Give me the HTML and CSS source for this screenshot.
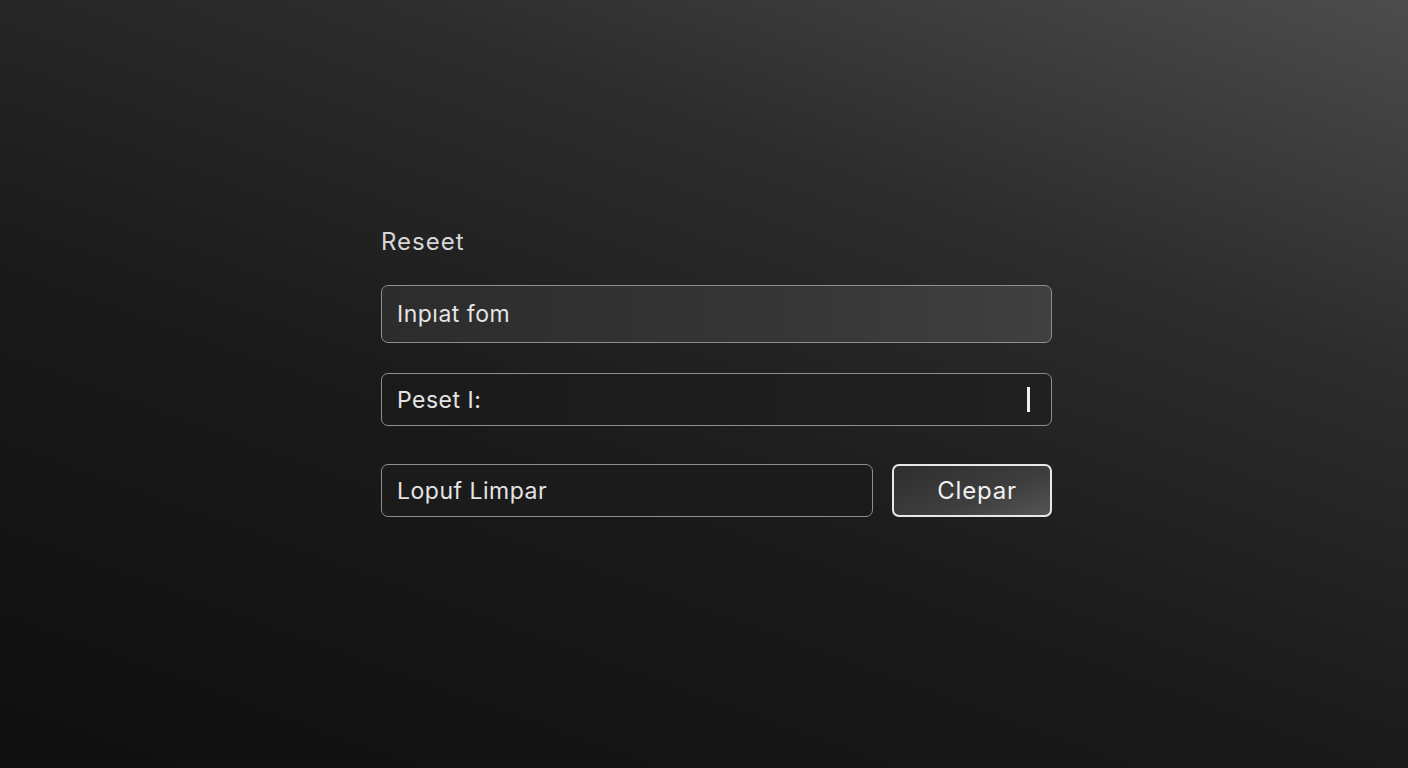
FILE: index.html
```html
<!DOCTYPE html>
<html lang="es">
<head>
    <meta charset="UTF-8">
    <meta name="viewport" content="width=device-width, initial-scale=1.0">
    <title>Reseet</title>
    <link rel="stylesheet" href="styles.css">
</head>
<body>
    <div class="panel">
        <div class="label">Reseet</div>
        <div class="field field-top">Inpıat fom</div>
        <div class="field field-cursor">
            <span>Peset I:</span>
            <span class="cursor"></span>
        </div>
        <div class="row">
            <div class="field field-row">Lopuf Limpar</div>
            <button class="btn">Clepar</button>
        </div>
    </div>
</body>
</html>
```

FILE: styles.css
```css
html, body {
    height: 100%;
}
body {
    margin: 0;
    font-family: Inter, "Noto Sans", sans-serif;
    color: #e2e2e2;
    background: linear-gradient(200deg, #4c4c4c 0%, #2c2c2c 30%, #1a1a1a 60%, #0f0f0f 100%);
    overflow: hidden;
}
.panel {
    width: 671px;
    margin-left: 381px;
    padding-top: 228px;
}
.label {
    font-size: 24px;
    line-height: 28px;
    letter-spacing: 1px;
    color: #d6d6d6;
    margin-bottom: 29px;
}
.field {
    box-sizing: border-box;
    display: flex;
    align-items: center;
    justify-content: space-between;
    border: 1px solid #8e8e8e;
    border-radius: 7px;
    padding: 0 15px;
    font-size: 23px;
    letter-spacing: 0.5px;
    color: #e4e4e4;
}
.field-top {
    height: 58px;
    background: linear-gradient(90deg, #2c2c2c 0%, #363636 60%, #404040 100%);
    margin-bottom: 30px;
}
.field-cursor {
    height: 53px;
    background: linear-gradient(90deg, #1a1a1a 0%, #202020 100%);
    margin-bottom: 38px;
    padding-right: 21px;
}
.cursor {
    width: 3px;
    height: 25px;
    background: #f0f0f0;
}
.row {
    display: flex;
    gap: 19px;
}
.field-row {
    flex: 1;
    height: 53px;
    background: #1b1b1b;
}
.btn {
    width: 160px;
    height: 53px;
    border: 2px solid #e8e8e8;
    border-radius: 7px;
    background: linear-gradient(160deg, #2e2e2e 0%, #3e3e3e 60%, #555 100%);
    color: #f0f0f0;
    font-family: Inter, "Noto Sans", sans-serif;
    font-size: 24px;
    letter-spacing: 0.8px;
    padding: 0 0 0 10px;
}
```
